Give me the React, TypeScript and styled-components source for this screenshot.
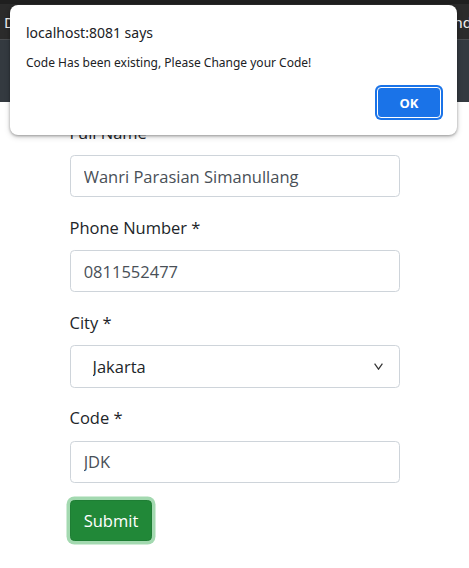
import React from "react";
import styled, { createGlobalStyle } from "styled-components";

const GlobalStyle = createGlobalStyle`
  html, body { margin: 0; padding: 0; background: #ffffff; }
  body { font-family: "Open Sans", "Noto Sans", Arial, sans-serif; }
  * { box-sizing: border-box; }
`;

const Page = styled.div`
  position: relative;
  width: 469px;
  height: 568px;
  overflow: hidden;
  background: #ffffff;
`;

const TopStrip = styled.div`
  height: 4px;
  background: #1f1f1f;
`;

const Navbar = styled.nav`
  height: 36px;
  background: #2b2b2b;
  border-bottom: 1px solid #4a4d50;
  display: flex;
  align-items: center;
  justify-content: space-between;
  overflow: hidden;
  color: #f0f0f0;
  font-family: "Noto Sans", Arial, sans-serif;
  font-size: 15px;
`;

const Brand = styled.span`
  padding-left: 4px;
`;

const NavLink = styled.span`
  margin-right: -3px;
`;

const SubBar = styled.div`
  height: 62px;
  background: #343a40;
`;

const Form = styled.form`
  width: 330px;
  margin: 0 auto;
  padding-top: 18px;
  font-size: 16.5px;
  color: #212529;
`;

const Group = styled.div`
  margin-bottom: 17.6px;
`;

const Label = styled.label`
  display: block;
  line-height: 26.4px;
  margin-bottom: 8.8px;
`;

const Input = styled.input`
  display: block;
  width: 100%;
  height: 42px;
  padding: 6.6px 13.2px;
  font-family: inherit;
  font-size: 16.5px;
  line-height: 26.4px;
  color: #495057;
  background: #fff;
  border: 1px solid #ced4da;
  border-radius: 4.4px;
  outline: none;
`;

const SelectWrap = styled.div`
  position: relative;
`;

const Select = styled.select`
  display: block;
  width: 100%;
  height: 43px;
  padding: 6.6px 13.2px 6.6px 22px;
  font-family: inherit;
  font-size: 16.5px;
  color: #212529;
  background: #fff;
  border: 1px solid #ced4da;
  border-radius: 4.4px;
  appearance: none;
  -webkit-appearance: none;
  outline: none;
`;

const Chevron = styled.svg`
  position: absolute;
  right: 17px;
  top: 18px;
  pointer-events: none;
`;

const SubmitButton = styled.button`
  height: 41px;
  padding: 0 13.2px;
  font-family: inherit;
  font-size: 16.5px;
  color: #fff;
  background: #218838;
  border: 1px solid #1e7e34;
  border-radius: 4.4px;
  box-shadow: 0 0 0 3.5px rgba(72, 180, 97, 0.5);
`;

const Dialog = styled.div`
  position: absolute;
  top: 5px;
  left: 10px;
  width: 447px;
  height: 130px;
  background: #fff;
  border-radius: 8px;
  box-shadow: 0 1px 3px rgba(0, 0, 0, 0.35), 0 2px 6px rgba(0, 0, 0, 0.15);
  padding: 18px 16px 0 16px;
  font-family: "Noto Sans", Arial, sans-serif;
  color: #202124;
  display: flex;
  flex-direction: column;
`;

const DialogTitle = styled.div`
  font-size: 14px;
  line-height: 20px;
  margin-bottom: 12px;
`;

const DialogMessage = styled.div`
  font-size: 12px;
  line-height: 16px;
`;

const DialogActions = styled.div`
  display: flex;
  justify-content: flex-end;
  margin-top: 16px;
`;

const OkButton = styled.button`
  width: 64px;
  height: 31px;
  font-family: "Noto Sans", Arial, sans-serif;
  font-size: 13px;
  font-weight: 700;
  color: #fff;
  background: #1a73e8;
  border: 1px solid #fff;
  border-radius: 4px;
  box-shadow: 0 0 0 2px #1a73e8;
`;

export default function App() {
  return (
    <>
      <GlobalStyle />
      <Page>
        <TopStrip />
        <Navbar>
          <Brand>Dashboard</Brand>
          <NavLink>Add Friend</NavLink>
        </Navbar>
        <SubBar />
        <Form onSubmit={(e) => e.preventDefault()}>
          <Group>
            <Label>Full Name</Label>
            <Input readOnly value="Wanri Parasian Simanullang" />
          </Group>
          <Group>
            <Label>Phone Number *</Label>
            <Input readOnly value="0811552477" />
          </Group>
          <Group>
            <Label>City *</Label>
            <SelectWrap>
              <Select defaultValue="Jakarta">
                <option>Jakarta</option>
              </Select>
              <Chevron width="9" height="7" viewBox="0 0 9 7">
                <path d="M0.6 0.6 L4.5 6.2 L8.4 0.6" fill="none" stroke="#333" strokeWidth="1.2" />
              </Chevron>
            </SelectWrap>
          </Group>
          <Group>
            <Label>Code *</Label>
            <Input readOnly value="JDK" />
          </Group>
          <SubmitButton type="submit">Submit</SubmitButton>
        </Form>
        <Dialog>
          <DialogTitle>localhost:8081 says</DialogTitle>
          <DialogMessage>Code Has been existing, Please Change your Code!</DialogMessage>
          <DialogActions>
            <OkButton>OK</OkButton>
          </DialogActions>
        </Dialog>
      </Page>
    </>
  );
}
